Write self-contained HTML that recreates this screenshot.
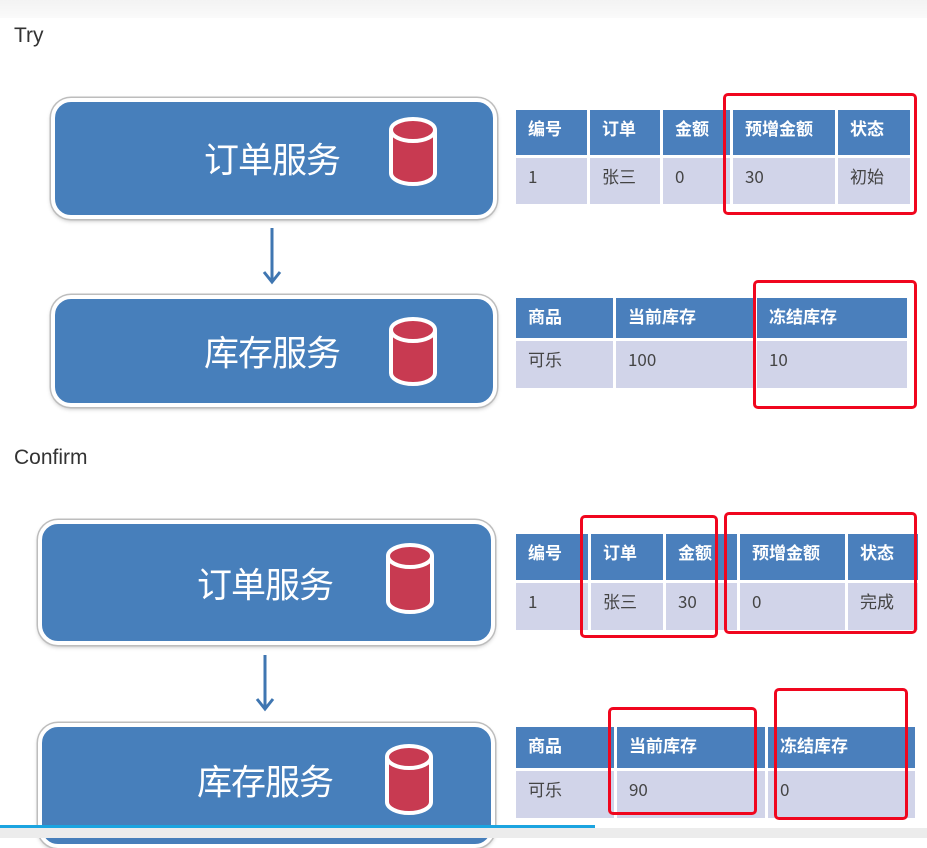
<!DOCTYPE html>
<html><head><meta charset="utf-8"><style>
*{margin:0;padding:0;box-sizing:border-box}
body{width:927px;height:838px;position:relative;overflow:hidden;background:#fff;font-family:"Liberation Sans","Noto Sans CJK SC",sans-serif}
.a{position:absolute}
.lbl{font-size:21px;color:#333}
.box{position:absolute;border:4px solid #fff;border-radius:20px;background:#477fbb;box-shadow:0 0 0 1.5px #bdbdbd,0 2px 4px rgba(0,0,0,.25)}
.box span{position:absolute;color:#fff;font-size:35px;font-family:"Noto Sans CJK SC",sans-serif;font-weight:400;white-space:nowrap;transform:translate(-50%,-50%);letter-spacing:-1px}
.cyl{position:absolute}
.t{position:absolute;display:grid;gap:3px;background:#fff}
.t div{font-family:"Noto Sans CJK SC",sans-serif;font-size:17px;line-height:20px;padding:8px 0 0 12px}
.h{background:#4a7fbc;color:#fff;font-weight:bold}
.c{background:#d1d4e9;color:#444}
.r{position:absolute;border:3px solid #f0061e;border-radius:5px}
</style></head><body>
<div class="a" style="left:0;top:0;width:927px;height:18px;background:linear-gradient(#f3f3f3,#fafafa)"></div>
<div class="a lbl" style="left:14px;top:24px">Try</div>
<div class="a lbl" style="left:14px;top:446px">Confirm</div>

<div class="box" style="left:51px;top:98px;width:446px;height:121px"><span style="left:217px;top:56px">订单服务</span></div>
<div class="box" style="left:51px;top:295px;width:446px;height:112px"><span style="left:217px;top:52px">库存服务</span></div>
<div class="box" style="left:38px;top:520px;width:457px;height:125px"><span style="left:223px;top:59px">订单服务</span></div>
<div class="box" style="left:38px;top:723px;width:457px;height:125px"><span style="left:223px;top:53px">库存服务</span></div>

<svg class="cyl" style="left:388px;top:117px" width="50" height="70" viewBox="0 0 50 70"><path d="M3 13 V56 A22 11 0 0 0 47 56 V13 A22 11 0 0 0 3 13 Z" fill="#c83a51" stroke="#fff" stroke-width="4"/><path d="M3 13 A22 11 0 0 0 47 13" fill="none" stroke="#fff" stroke-width="4"/></svg>
<svg class="cyl" style="left:388px;top:317px" width="50" height="70" viewBox="0 0 50 70"><path d="M3 13 V56 A22 11 0 0 0 47 56 V13 A22 11 0 0 0 3 13 Z" fill="#c83a51" stroke="#fff" stroke-width="4"/><path d="M3 13 A22 11 0 0 0 47 13" fill="none" stroke="#fff" stroke-width="4"/></svg>
<svg class="cyl" style="left:385px;top:543px" width="50" height="72" viewBox="0 0 50 72"><path d="M3 13 V58 A22 11 0 0 0 47 58 V13 A22 11 0 0 0 3 13 Z" fill="#c83a51" stroke="#fff" stroke-width="4"/><path d="M3 13 A22 11 0 0 0 47 13" fill="none" stroke="#fff" stroke-width="4"/></svg>
<svg class="cyl" style="left:384px;top:744px" width="50" height="72" viewBox="0 0 50 72"><path d="M3 13 V58 A22 11 0 0 0 47 58 V13 A22 11 0 0 0 3 13 Z" fill="#c83a51" stroke="#fff" stroke-width="4"/><path d="M3 13 A22 11 0 0 0 47 13" fill="none" stroke="#fff" stroke-width="4"/></svg>

<svg class="a" style="left:262px;top:227px" width="20" height="58"><path d="M10 1 V54 M2 45 L10 55 L18 45" fill="none" stroke="#3f76b1" stroke-width="3"/></svg>
<svg class="a" style="left:255px;top:654px" width="20" height="58"><path d="M10 1 V54 M2 45 L10 55 L18 45" fill="none" stroke="#3f76b1" stroke-width="3"/></svg>

<div class="t" style="left:516px;top:110px;width:391px;grid-template-columns:71px 70px 67px 102px 72px;grid-template-rows:45px 46px">
<div class="h">编号</div><div class="h">订单</div><div class="h">金额</div><div class="h">预增金额</div><div class="h">状态</div>
<div class="c">1</div><div class="c">张三</div><div class="c">0</div><div class="c">30</div><div class="c">初始</div></div>

<div class="t" style="left:516px;top:298px;width:391px;grid-template-columns:97px 138px 150px;grid-template-rows:40px 47px">
<div class="h">商品</div><div class="h">当前库存</div><div class="h">冻结库存</div>
<div class="c">可乐</div><div class="c">100</div><div class="c">10</div></div>

<div class="t" style="left:516px;top:534px;width:399px;grid-template-columns:72px 72px 71px 105px 70px;grid-template-rows:46px 47px">
<div class="h">编号</div><div class="h">订单</div><div class="h">金额</div><div class="h">预增金额</div><div class="h">状态</div>
<div class="c">1</div><div class="c">张三</div><div class="c">30</div><div class="c">0</div><div class="c">完成</div></div>

<div class="t" style="left:516px;top:727px;width:399px;grid-template-columns:98px 148px 147px;grid-template-rows:41px 47px">
<div class="h">商品</div><div class="h">当前库存</div><div class="h">冻结库存</div>
<div class="c">可乐</div><div class="c">90</div><div class="c">0</div></div>

<div class="r" style="left:723px;top:93px;width:194px;height:122px"></div>
<div class="r" style="left:753px;top:280px;width:164px;height:129px"></div>
<div class="r" style="left:580px;top:515px;width:138px;height:123px"></div>
<div class="r" style="left:724px;top:512px;width:193px;height:122px"></div>
<div class="r" style="left:608px;top:707px;width:149px;height:108px"></div>
<div class="r" style="left:774px;top:688px;width:134px;height:132px"></div>

<div class="a" style="left:0;top:828px;width:927px;height:10px;background:#ececec"></div>
<div class="a" style="left:0;top:825px;width:595px;height:3px;background:#1ba4e0"></div>
</body></html>
